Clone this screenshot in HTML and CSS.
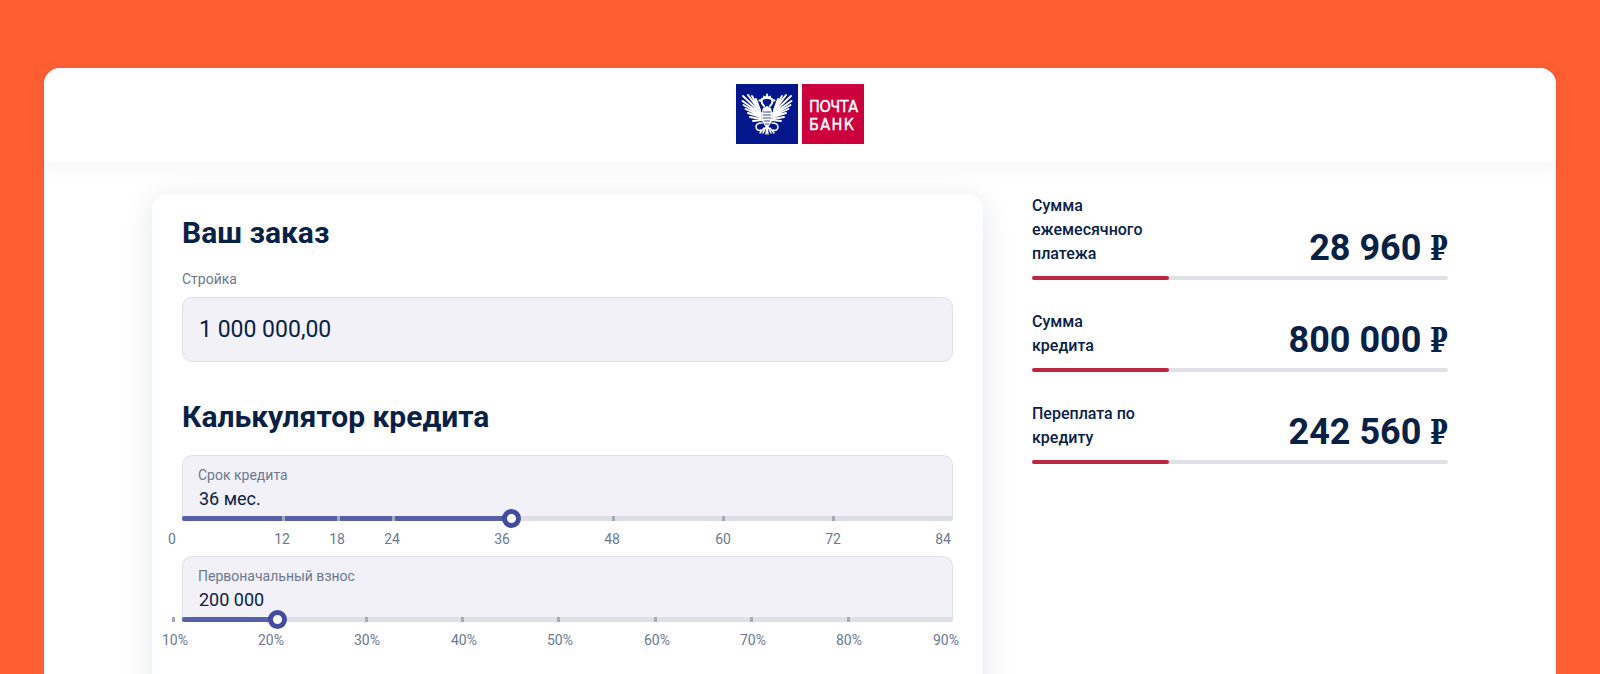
FILE: index.html
```html
<!DOCTYPE html>
<html lang="ru">
<head>
    <meta charset="UTF-8">
    <meta name="viewport" content="width=device-width, initial-scale=1.0">
    <title>Почта Банк - калькулятор кредита</title>
    <link rel="stylesheet" href="styles.css">
</head>
<body>
    <div class="panel">
        <header class="header">
            <svg class="logo" width="128" height="60" viewBox="0 0 128 60">
                <rect x="0" y="0" width="62" height="60" fill="#03168c"/>
                <rect x="66" y="0" width="62" height="60" fill="#cc003d"/>
                <!-- eagle: one half, mirrored -->
                <g id="eagle-half">
                    <g fill="none" stroke="#fff" stroke-linecap="round">
                        <path stroke-width="1.9" d="M25 29 L7 12 M25 30 L6.5 17 M25 31 L7.5 21 M25 32 L9.5 25 M25 33 L12 29 M25 35 L14 33 M26 36 L17 37"/>
                        <path stroke-width="1.9" d="M24 27 L12 11 M24 26 L16 12 M24 26 L20 15"/>
                        <path stroke-width="2" d="M28 22 C26 20 25 18 26 16 L23.5 16.5 M26 15 L29 14"/>
                        <path stroke-width="1.5" d="M26 39 C22 39 20 40 20 43 C20 46 23 47 25 46 M30 43 L27 49 M31 44 L30 50 M28 44 L24 49"/>
                    </g>
                    <path fill="#fff" d="M31 22 L27 24 L25.5 30 L26 37 L29 42 L31 44 Z"/>
                    <path fill="#fff" d="M31 9 L32 12 L31 15 L27.5 15 L27 11.5 L29.5 12.5 Z"/>
                    <path fill="none" stroke="#03168c" stroke-width="0.8" d="M27 28 H31 M27 31 H31 M27 34 H31 M28 37 H31 M29 40 H31"/>
                </g>
                <use href="#eagle-half" transform="translate(62 0) scale(-1 1)"/>
                <text class="logo-text" x="73" y="27.5" textLength="49">ПОЧТА</text>
                <text class="logo-text" x="73" y="45.5" textLength="45">БАНК</text>
            </svg>
        </header>

        <div class="content">
            <main class="card">
                <h2 class="title">Ваш заказ</h2>
                <div class="field-label">Стройка</div>
                <div class="field">1 000 000,00</div>

                <h2 class="title title-calc">Калькулятор кредита</h2>

                <!-- term slider -->
                <div class="slider">
                    <div class="slider-box">
                        <div class="slider-label">Срок кредита</div>
                        <div class="slider-value">36 мес.</div>
                    </div>
                    <div class="track">
                        <div class="track-fill" style="width: 329px"></div>
                        <i class="tick" style="left: 100px"></i>
                        <i class="tick" style="left: 155px"></i>
                        <i class="tick" style="left: 210px"></i>
                        <i class="tick" style="left: 430px"></i>
                        <i class="tick" style="left: 540px"></i>
                        <i class="tick" style="left: 650px"></i>
                        <div class="thumb" style="left: 320px"></div>
                    </div>
                    <div class="scale">
                        <span style="left: -10px">0</span>
                        <span style="left: 100px">12</span>
                        <span style="left: 155px">18</span>
                        <span style="left: 210px">24</span>
                        <span style="left: 320px">36</span>
                        <span style="left: 430px">48</span>
                        <span style="left: 541px">60</span>
                        <span style="left: 651px">72</span>
                        <span style="left: 761px">84</span>
                    </div>
                </div>

                <!-- down payment slider -->
                <div class="slider">
                    <div class="slider-box">
                        <div class="slider-label">Первоначальный взнос</div>
                        <div class="slider-value">200 000</div>
                    </div>
                    <div class="track">
                        <div class="track-fill" style="width: 95px"></div>
                        <i class="tick" style="left: -10px"></i>
                        <i class="tick" style="left: 183px"></i>
                        <i class="tick" style="left: 279px"></i>
                        <i class="tick" style="left: 375px"></i>
                        <i class="tick" style="left: 472px"></i>
                        <i class="tick" style="left: 568px"></i>
                        <i class="tick" style="left: 665px"></i>
                        <div class="thumb" style="left: 86px"></div>
                    </div>
                    <div class="scale">
                        <span style="left: -7px">10%</span>
                        <span style="left: 89px">20%</span>
                        <span style="left: 185px">30%</span>
                        <span style="left: 282px">40%</span>
                        <span style="left: 378px">50%</span>
                        <span style="left: 475px">60%</span>
                        <span style="left: 571px">70%</span>
                        <span style="left: 667px">80%</span>
                        <span style="left: 764px">90%</span>
                    </div>
                </div>
            </main>

            <aside class="summary">
                <div class="sum-row">
                    <div class="sum-head">
                        <div class="sum-label">Сумма<br>ежемесячного<br>платежа</div>
                        <div class="sum-value">28 960 <span class="rub">₽</span></div>
                    </div>
                    <div class="sum-bar"><div class="sum-fill"></div></div>
                </div>
                <div class="sum-row">
                    <div class="sum-head">
                        <div class="sum-label">Сумма<br>кредита</div>
                        <div class="sum-value">800 000 <span class="rub">₽</span></div>
                    </div>
                    <div class="sum-bar"><div class="sum-fill"></div></div>
                </div>
                <div class="sum-row">
                    <div class="sum-head">
                        <div class="sum-label">Переплата по<br>кредиту</div>
                        <div class="sum-value">242 560 <span class="rub">₽</span></div>
                    </div>
                    <div class="sum-bar"><div class="sum-fill"></div></div>
                </div>
            </aside>
        </div>
    </div>
</body>
</html>
```

FILE: styles.css
```css
html, body {
    height: 100%;
}
body {
    margin: 0;
    padding: 68px 44px 0;
    box-sizing: border-box;
    overflow: hidden;
    background-color: #ff5e33;
    font-family: Roboto, "Noto Sans", sans-serif;
    color: #0a2146;
}
.panel {
    height: 800px;
    background-color: #fff;
    border-radius: 16px 16px 0 0;
}
.header {
    display: flex;
    justify-content: center;
    align-items: center;
    box-sizing: border-box;
    height: 94px;
    padding-bottom: 2px;
    background-color: #fff;
    border-radius: 16px 16px 0 0;
    box-shadow: 0 4px 20px rgba(10, 33, 70, 0.05);
}
.logo {
    display: block;
}
.logo-text {
    font-family: "Liberation Sans Narrow", "DejaVu Sans Condensed", sans-serif;
    font-size: 16px;
    fill: #fff;
    stroke: #fff;
    stroke-width: 0.4px;
}
.content {
    display: flex;
    gap: 49px;
    padding: 32px 0 0 108px;
}
.card {
    width: 771px;
    height: 600px;
    padding: 23px 30px 0;
    background-color: #fff;
    border-radius: 16px;
    box-shadow: 0 6px 30px rgba(10, 33, 70, 0.12);
}
.title {
    margin: 0;
    font-size: 30px;
    font-weight: 700;
    line-height: 32px;
}
.title-calc {
    margin-top: 39px;
    margin-bottom: 21px;
}
.field-label {
    margin-top: 22px;
    margin-bottom: 10px;
    font-size: 14px;
    line-height: 16px;
    color: #6b7890;
}
.field {
    box-sizing: border-box;
    height: 65px;
    padding: 0 16px;
    line-height: 64px;
    font-size: 23px;
    background-color: #f1f1f7;
    border: 1px solid #dfe1e8;
    border-radius: 10px;
}
.slider {
    position: relative;
    box-sizing: border-box;
    height: 101px;
    padding-top: 1px;
}
.slider-box {
    box-sizing: border-box;
    height: 61px;
    padding: 11px 16px 0;
    background-color: #f1f1f7;
    border: 1px solid #dfe1e8;
    border-bottom: 0;
    border-radius: 10px 10px 0 0;
}
.slider-label {
    margin-left: -1px;
    font-size: 14px;
    line-height: 17px;
    color: #6b7890;
}
.slider-value {
    margin-top: 4px;
    font-size: 18px;
    line-height: 22px;
}
.track {
    position: relative;
    height: 5px;
    background-color: #dcdfe5;
    border-radius: 0 0 2px 2px;
}
.track-fill {
    height: 100%;
    background-color: #5560a8;
    border-radius: 2px 0 0 2px;
}
.tick {
    position: absolute;
    top: 0;
    width: 3px;
    height: 5px;
    background-color: #a3aab8;
}
.thumb {
    position: absolute;
    top: -7px;
    box-sizing: border-box;
    width: 19px;
    height: 19px;
    background-color: #fff;
    border: 5px solid #434c9e;
    border-radius: 50%;
}
.scale {
    position: relative;
    height: 34px;
    font-size: 14px;
    line-height: 16px;
    color: #6b7890;
}
.scale span {
    position: absolute;
    top: 10px;
    transform: translateX(-50%);
}
.summary {
    display: flex;
    flex-direction: column;
    gap: 30px;
    width: 416px;
}
.sum-head {
    display: flex;
    justify-content: space-between;
    align-items: flex-end;
}
.sum-label {
    font-size: 16px;
    font-weight: 500;
    line-height: 24px;
}
.sum-value {
    font-size: 36px;
    font-weight: 700;
    line-height: 34px;
    white-space: nowrap;
}
.rub {
    display: inline-block;
    margin-left: -3px;
    font-family: "DejaVu Serif Condensed", "DejaVu Serif", serif;
    font-size: 33px;
    transform: scaleX(0.86);
    transform-origin: right;
}
.sum-bar {
    height: 4px;
    margin-top: 10px;
    background-color: #dfe1e6;
    border-radius: 2px;
}
.sum-fill {
    width: 33%;
    height: 100%;
    background-color: #bd2541;
    border-radius: 2px;
}
```
